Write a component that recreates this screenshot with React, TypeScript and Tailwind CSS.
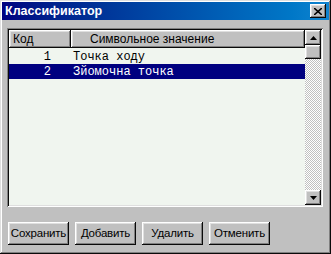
import React from 'react';

const raised =
  'shadow-[inset_-1px_-1px_#0a0a0a,inset_1px_1px_#ffffff,inset_-2px_-2px_#808080,inset_2px_2px_#dfdfdf]';

const rows = [
  { code: '1', name: 'Точка ходу' },
  { code: '2', name: 'Зйомочна точка', selected: true },
];

function Arrow({ up }: { up?: boolean }) {
  return (
    <svg width="7" height="4" viewBox="0 0 7 4">
      <path d={up ? 'M3.5 0L7 4H0Z' : 'M0 0H7L3.5 4Z'} fill="#000" />
    </svg>
  );
}

function Button({ label }: { label: string }) {
  return (
    <button
      className={`w-[61px] h-[23px] bg-[#c0c0c0] text-[11.5px] tracking-[-0.2px] text-black ${raised} flex items-center justify-center`}
    >
      {label}
    </button>
  );
}

export default function App() {
  return (
    <div
      className="w-[331px] h-[254px] bg-[#c0c0c0] p-[2px] flex flex-col shadow-[inset_-1px_-1px_#0a0a0a,inset_1px_1px_#dfdfdf,inset_-2px_-2px_#808080,inset_2px_2px_#ffffff]"
      style={{ fontFamily: '"Liberation Sans", Arial, sans-serif' }}
    >
      {/* Title bar */}
      <div className="h-[18px] flex items-center justify-between pl-[3px] pr-[3px] bg-gradient-to-r from-[#000080] to-[#1084d0]">
        <span className="text-white font-bold text-[12.5px] leading-none">Классификатор</span>
        <div className={`w-[16px] h-[14px] bg-[#c0c0c0] ${raised} flex items-center justify-center`}>
          <svg width="8" height="7" viewBox="0 0 8 7">
            <path d="M0 0L8 7M8 0L0 7" stroke="#000" strokeWidth="1.6" />
          </svg>
        </div>
      </div>

      {/* List box */}
      <div className="mt-[8px] ml-[5px] w-[316px] h-[179px] p-[2px] bg-[#f0f5ef] flex shadow-[inset_1px_1px_#808080,inset_-1px_-1px_#ffffff,inset_2px_2px_#0a0a0a,inset_-2px_-2px_#dfdfdf]">
        <div className="flex-1 flex flex-col">
          <div className="h-[18px] flex text-[12px] text-black">
            <div className={`w-[62px] bg-[#c0c0c0] ${raised} flex items-center pl-[4px]`}>Код</div>
            <div className={`flex-1 bg-[#c0c0c0] ${raised} flex items-center pl-[19px]`}>
              Символьное значение
            </div>
          </div>
          <div className="pt-[1px]" style={{ fontFamily: '"Liberation Mono", "Courier New", monospace' }}>
            {rows.map((r) => (
              <div
                key={r.code}
                className={`h-[15px] flex items-center text-[12px] ${
                  r.selected ? 'bg-[#000080] text-white' : 'text-black'
                }`}
              >
                <span className="w-[62px] text-right pr-[20px]">{r.code}</span>
                <span className="pl-[2px] whitespace-pre">{r.name}</span>
              </div>
            ))}
          </div>
        </div>

        {/* Scrollbar */}
        <div className="w-[16px] flex flex-col bg-[repeating-conic-gradient(#c0c0c0_0_25%,#ffffff_0_50%)] bg-[length:2px_2px]">
          <div className={`h-[15px] bg-[#c0c0c0] ${raised} flex items-center justify-center`}>
            <Arrow up />
          </div>
          <div className={`h-[14px] bg-[#c0c0c0] ${raised}`} />
          <div className="flex-1" />
          <div className={`h-[15px] bg-[#c0c0c0] ${raised} flex items-center justify-center`}>
            <Arrow />
          </div>
        </div>
      </div>

      {/* Buttons */}
      <div className="mt-[15px] ml-[6px] flex gap-[6px]">
        <Button label="Сохранить" />
        <Button label="Добавить" />
        <Button label="Удалить" />
        <Button label="Отменить" />
      </div>
    </div>
  );
}
